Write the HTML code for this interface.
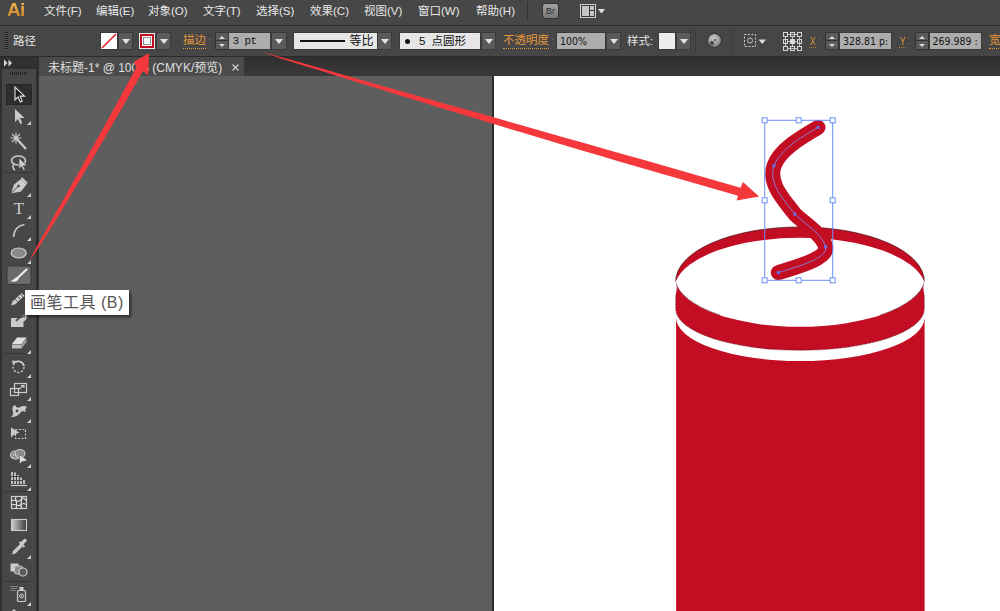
<!DOCTYPE html>
<html lang="zh-CN">
<head>
<meta charset="utf-8">
<title>Illustrator</title>
<style>
html,body{margin:0;padding:0;}
body{width:1000px;height:611px;overflow:hidden;position:relative;background:#5e5e5e;font-family:"Liberation Sans","Noto Sans CJK SC",sans-serif;font-size:12px;color:#e6e6e6;}
.abs{position:absolute;}
#menubar{left:0;top:0;width:1000px;height:25px;background:#474747;}
#menubar span.m{position:absolute;top:3px;line-height:16px;font-size:11.5px;color:#e8e8e8;white-space:nowrap;}
#ctrl{left:0;top:25px;width:1000px;height:31px;background:#464646;border-top:1px solid #2e2e2e;box-sizing:border-box;}
#tabbar{left:0;top:56px;width:1000px;height:20px;background:linear-gradient(#2f2f2f,#393939);border-top:1px solid #2a2a2a;box-sizing:border-box;}
#tab{left:39px;top:57px;width:205px;height:19px;background:#4b4b4b;}
#tab span{position:absolute;left:9px;top:3px;line-height:16px;font-size:12px;color:#e0e0e0;white-space:nowrap;}
#tools{left:0;top:57px;width:39px;height:554px;background:#474747;border-right:3px solid #2f2f2f;box-sizing:border-box;}
#artboard{left:492px;top:76px;width:507px;height:535px;background:#fff;border-left:2px solid #2b2b2b;box-sizing:content-box;}
.lbl{position:absolute;line-height:16px;font-size:11.5px;white-space:nowrap;}
.or{color:#e8973a;}
.dd{position:absolute;top:33px;height:16px;width:13px;background:#5b5b5b;box-shadow:0 0 0 1px #3a3a3a;}
.dd:after{content:"";position:absolute;left:2.5px;top:6px;border-left:4px solid transparent;border-right:4px solid transparent;border-top:5px solid #e4e4e4;}
.inp{position:absolute;top:33px;height:16px;background:#adadad;color:#111;font-size:11px;line-height:16px;box-shadow:0 0 0 1px #3a3a3a;white-space:nowrap;overflow:hidden;}
.box{position:absolute;top:33px;height:16px;background:#e6e6e6;color:#111;box-shadow:0 0 0 1px #3a3a3a;white-space:nowrap;overflow:hidden;}
.spin{position:absolute;top:33px;width:12px;height:16px;background:linear-gradient(to bottom,#5b5b5b 0,#5b5b5b 7.5px,#333 7.5px,#333 8.5px,#5b5b5b 8.5px);box-shadow:0 0 0 1px #333;}
.spin:before{content:"";position:absolute;left:3px;top:2.500px;border-left:3px solid transparent;border-right:3px solid transparent;border-bottom:3.500px solid #dadada;}
.spin:after{content:"";position:absolute;left:3px;top:10.500px;border-left:3px solid transparent;border-right:3px solid transparent;border-top:3.500px solid #dadada;}
.mono{position:absolute;top:0;font-family:"DejaVu Sans Condensed","DejaVu Sans",sans-serif;font-size:10.5px;line-height:16px;color:#151515;white-space:pre;}
.xy{position:absolute;top:36px;font-size:10px;line-height:12px;color:#e8973a;transform:scaleX(0.85);transform-origin:0 0;}
.xyu{position:absolute;top:47px;height:1px;width:8px;background:repeating-linear-gradient(to right,#b37a35 0,#b37a35 1px,transparent 1px,transparent 2px);}
</style>
</head>
<body>
<div id="artboard" class="abs"></div>
<div id="menubar" class="abs">
  <span class="abs" style="left:7px;top:-2px;font-size:19px;line-height:24px;font-weight:bold;color:#e9a33b;letter-spacing:-0.6px;background:linear-gradient(#f3b44d 20%,#c9842a 80%);-webkit-background-clip:text;background-clip:text;-webkit-text-fill-color:transparent;">Ai</span>
  <span class="m" style="left:44px">文件(F)</span>
  <span class="m" style="left:96px">编辑(E)</span>
  <span class="m" style="left:148px">对象(O)</span>
  <span class="m" style="left:203px">文字(T)</span>
  <span class="m" style="left:256px">选择(S)</span>
  <span class="m" style="left:310px">效果(C)</span>
  <span class="m" style="left:364px">视图(V)</span>
  <span class="m" style="left:418px">窗口(W)</span>
  <span class="m" style="left:476px">帮助(H)</span>
</div>
<div id="ctrl" class="abs"></div>
<span class="lbl" style="left:13px;top:33px;">路径</span>

<!-- control bar widgets -->
<div class="abs" style="left:5px;top:32px;width:3px;height:18px;background:repeating-linear-gradient(to bottom,#202020 0,#202020 1px,#505050 1px,#505050 2px);"></div>
<div class="abs" style="left:101px;top:33px;width:16px;height:16px;background:#fff;box-shadow:0 0 0 1px #3a3a3a;overflow:hidden;">
  <svg width="16" height="16" style="display:block"><line x1="1" y1="15" x2="15" y2="1" stroke="#e0202a" stroke-width="1.6"/></svg>
</div>
<div class="dd" style="left:119px"></div>
<div class="abs" style="left:140px;top:34px;width:14px;height:14px;background:#c30d23;box-shadow:0 0 0 1px #e9e9e9;">
  <div class="abs" style="left:3px;top:3px;width:6px;height:6px;background:#fff;border:1px solid #8c8c8c;box-shadow:0 0 0 1px #fff;"></div>
</div>
<div class="dd" style="left:157px"></div>
<span class="lbl or" style="left:183px;top:33px;border-bottom:1px dotted #e8973a;line-height:15px;">描边</span><span class="lbl" style="left:208px;top:33px;color:#9a7040">:</span>
<div class="spin" style="left:216px"></div>
<div class="inp" style="left:229px;width:41px;"><span class="mono" style="left:3.500px;font-family:'Liberation Mono',monospace;font-size:11px;letter-spacing:-0.6px;">3 pt</span></div>
<div class="dd" style="left:272px;width:14px"></div>
<div class="box" style="left:293.500px;width:83px;">
  <div class="abs" style="left:6px;top:7px;width:45px;height:2px;background:#111"></div>
  <span class="abs" style="left:56px;top:0;font-size:12px;line-height:16px;">等比</span>
</div>
<div class="dd" style="left:378px"></div>
<div class="box" style="left:400px;width:80px;">
  <div class="abs" style="left:5px;top:5.500px;width:5px;height:5px;border-radius:50%;background:#111"></div>
  <span class="abs" style="left:19px;top:0;font-size:11.500px;line-height:16px;word-spacing:3px;">5 点圆形</span>
</div>
<div class="dd" style="left:482px"></div>
<span class="lbl or" style="left:503px;top:33px;border-bottom:1px dotted #e8973a;line-height:15px;">不透明度</span><span class="lbl" style="left:551px;top:33px;color:#9a7040">:</span>
<div class="inp" style="left:557px;width:48px;"><span class="mono" style="left:3px">100%</span></div>
<div class="dd" style="left:607px"></div>
<span class="lbl" style="left:627px;top:33px;">样式:</span>
<div class="abs" style="left:659px;top:33px;width:16px;height:16px;background:#ececec;box-shadow:0 0 0 1px #3a3a3a;"></div>
<div class="dd" style="left:677px"></div>
<div class="abs" style="left:695px;top:29px;width:1px;height:24px;background:#3a3a3a;"></div>
<div class="abs" style="left:707.500px;top:34px;width:13px;height:13px;border-radius:50%;background:radial-gradient(circle at 45% 35%,#cfcfcf 0,#9a9a9a 50%,#5a5a5a 100%);box-shadow:0 0 0 1px #333;overflow:hidden;"><div class="abs" style="left:2px;top:7px;width:4px;height:4px;border-radius:50%;background:#2e2e2e;opacity:.8"></div><div class="abs" style="left:6px;top:5px;width:2px;height:2px;border-radius:50%;background:#444;"></div></div>
<div class="abs" style="left:732px;top:29px;width:1px;height:24px;background:#3a3a3a;"></div>
<svg class="abs" style="left:743px;top:33px" width="26" height="16"><rect x="1.5" y="1.5" width="11" height="12" fill="none" stroke="#cacaca" stroke-dasharray="2 1.5"/><circle cx="7" cy="7.5" r="2.5" fill="none" stroke="#bdbdbd"/><path d="M15.5 6.5h7.5l-3.75 4.5z" fill="#dadada"/></svg>
<svg class="abs" style="left:783px;top:31.500px" width="19" height="19" fill="none" stroke="#d6d6d6"><path d="M2.500,5v9M9.500,5v9M16.500,5v9M5,2.500h9M5,9.500h9M5,16.500h9" stroke="#bdbdbd"/><g id="g9"><rect x="0.5" y="0.5" width="4" height="4"/><rect x="7.5" y="0.5" width="4" height="4"/><rect x="14.5" y="0.5" width="4" height="4"/></g><g transform="translate(0,7)"><rect x="0.5" y="0.5" width="4" height="4"/><rect x="7.5" y="0.5" width="4" height="4" fill="#dcdcdc"/><rect x="14.5" y="0.5" width="4" height="4"/></g><g transform="translate(0,14)"><rect x="0.5" y="0.5" width="4" height="4"/><rect x="7.5" y="0.5" width="4" height="4"/><rect x="14.5" y="0.5" width="4" height="4"/></g></svg>
<span class="xy" style="left:810px;">X</span><div class="xyu" style="left:809px"></div><span class="lbl" style="left:818px;top:33px;color:#8a6a40;font-size:10px">:</span>
<div class="spin" style="left:826px"></div>
<div class="inp" style="left:840px;width:51px;"><span class="mono" style="left:3px">328.81 p:</span></div>
<span class="xy" style="left:900px;">Y</span><div class="xyu" style="left:899px"></div><span class="lbl" style="left:907.500px;top:33px;color:#8a6a40;font-size:10px">:</span>
<div class="spin" style="left:915.500px"></div>
<div class="inp" style="left:929.500px;width:51px;"><span class="mono" style="left:3px">269.989 :</span></div>
<span class="lbl or" style="left:989px;top:33px;border-bottom:1px dotted #e8973a;line-height:15px;">宽</span>
<!-- menubar extras -->
<div class="abs" style="left:527px;top:2px;width:1px;height:19px;background:#333;"></div>
<div class="abs" style="left:543px;top:4px;width:15px;height:14px;background:linear-gradient(#a2a2a2,#787878);border-radius:2px;box-shadow:0 0 0 1px #333;font-size:9px;line-height:14px;text-align:center;color:#2a2a2a;">Br</div>
<svg class="abs" style="left:579px;top:3px" width="28" height="16"><rect x="1.500" y="1.500" width="15" height="13" fill="#3a3a3a" stroke="#cfcfcf"/><rect x="3" y="3" width="7" height="10" fill="#c4c4c4"/><rect x="11" y="3" width="4" height="4" fill="#c4c4c4"/><rect x="11" y="8" width="4" height="5" fill="#c4c4c4"/><path d="M19 6h7l-3.500 4.500z" fill="#e0e0e0"/></svg>
<div id="tabbar" class="abs"></div>
<div id="tab" class="abs"><span>未标题-1* @ 100% (CMYK/预览)</span><svg class="abs" style="left:192px;top:6px" width="9" height="9"><path d="M1.500,1.500 l6,6 M7.500,1.500 l-6,6" stroke="#d4d4d4" stroke-width="1.100"/></svg></div>
<div id="tools" class="abs"></div>
<svg class="abs" style="left:0;top:0" width="40" height="611" viewBox="0 0 40 611">
  <rect x="0" y="57" width="2" height="554" fill="#2f2f2f"/>
  <rect x="2" y="57" width="34" height="12" fill="#303030"/>
  <path d="M4,59.500 l3.500,3.500 l-3.500,3.500z M8.500,59.500 l3.500,3.500 l-3.500,3.500z" fill="#d8d8d8"/>
  <path d="M10,73.500 h18" stroke="#262626" stroke-width="3" stroke-dasharray="1 1"/>
  <g stroke="#363636" stroke-width="1"><path d="M4,172.500h30M4,353.500h30M4,491.500h30M4,581.500h30"/></g>
  <!-- selection (active) -->
  <rect x="6.500" y="84.500" width="25" height="20" fill="#2e2e2e" stroke="#262626"/>
  <path d="M15,87 l0,13 l3,-3 l2.300,5 l2,-0.900 l-2.300,-5 l4.500,0z" fill="#1c1c1c" stroke="#e4e4e4" stroke-width="1.100" stroke-linejoin="miter"/>
  <!-- direct selection -->
  <path d="M15,109 l0,13 l3,-3 l2.300,5 l2,-0.900 l-2.300,-5 l4.500,0z" fill="#cbcbcb"/>
  <path d="M31,125 v-4 l-4,4z" fill="#d0d0d0"/>
  <!-- magic wand -->
  <g stroke="#cbcbcb" stroke-width="1.200" fill="none"><path d="M16,138 l10,11" stroke-width="2.200"/><path d="M16,132.500v11M10.500,138h11M12,134l8,8M20,134l-8,8"/></g>
  <!-- lasso -->
  <g fill="none" stroke="#cbcbcb" stroke-width="1.600"><ellipse cx="18.500" cy="160.500" rx="7" ry="4.500"/><path d="M14,164 c-2,2 -1,5 1,6"/></g>
  <path d="M19,158 l0,11 l2.500,-2.500 l2,4 l1.700,-0.800 l-2,-4 l3.800,0z" fill="#cbcbcb" stroke="#474747" stroke-width="0.600"/>
  <!-- pen -->
  <path d="M11,193.500 l3,-9 l7,-5.500 l5.500,5.500 l-5.500,7z" fill="#cbcbcb"/><path d="M11,193.500 l7,-7" stroke="#474747" stroke-width="1"/><circle cx="18.500" cy="186" r="1.300" fill="#474747"/><path d="M21.500,178 l5.500,5.500" stroke="#cbcbcb" stroke-width="2"/>
  <path d="M31,197 v-4 l-4,4z" fill="#d0d0d0"/>
  <!-- type -->
  <text x="19" y="214" text-anchor="middle" font-family="Liberation Serif, serif" font-size="17" fill="#cbcbcb">T</text>
  <path d="M31,219 v-4 l-4,4z" fill="#d0d0d0"/>
  <!-- arc -->
  <path d="M13.500,237 C14,230 18,225.500 24.500,224.500" fill="none" stroke="#cbcbcb" stroke-width="1.600"/>
  <path d="M31,241 v-4 l-4,4z" fill="#d0d0d0"/>
  <!-- ellipse -->
  <ellipse cx="18.700" cy="253" rx="7.500" ry="5" fill="#8a8a8a" stroke="#cbcbcb" stroke-width="1.200"/>
  <path d="M31,264 v-4 l-4,4z" fill="#d0d0d0"/>
  <!-- brush (active) -->
  <rect x="7" y="266" width="24" height="18.500" fill="#6a6a6a" stroke="#383838"/>
  <path d="M26.500,269.500 l-9,8.500" stroke="#ececec" stroke-width="2.200" stroke-linecap="round"/><path d="M17.500,277 c-2.500,0 -3.500,3 -7,4 c3,1.500 8,0.500 8.500,-3z" fill="#ececec"/>
  <!-- pencil -->
  <path d="M11,305.500 l1.500,-4 l9,-8.500 l2.800,2.800 l-9,8.500z" fill="#cbcbcb"/><path d="M15,299 l2.500,2.500M17.500,296.500 l2.500,2.500M20,294 l2.500,2.500" stroke="#474747" stroke-width="0.900"/>
  <!-- blob brush -->
  <path d="M11,318 h9 c1,-3 5,-4 6.500,-2 c1,2 -1,5 -3,5.500 v5.500 h-12.500z" fill="#cbcbcb"/><path d="M16,321 c2,-3 6,-5 9,-4.500" stroke="#474747" stroke-width="1.800" fill="none"/>
  <!-- eraser -->
  <path d="M12,344 l5,-6.500 h9.500 l-5,6.500z" fill="#e0e0e0"/><path d="M12,344.500 h9.500 v4 h-9.500z" fill="#bdbdbd"/><path d="M21.500,344.500 l5,-6.500 v4 l-5,6.500z" fill="#a2a2a2"/>
  <path d="M31,354 v-4 l-4,4z" fill="#d0d0d0"/>
  <!-- rotate -->
  <circle cx="18.500" cy="367" r="5.500" fill="none" stroke="#cbcbcb" stroke-width="1.400" stroke-dasharray="2 1.800"/><path d="M14,363 a6,6 0 0 1 10,3" fill="none" stroke="#cbcbcb" stroke-width="1.600"/><path d="M12,360.500 l4.500,0.500 l-3.500,3.500z" fill="#cbcbcb"/>
  <path d="M31,378 v-4 l-4,4z" fill="#d0d0d0"/>
  <!-- scale -->
  <g fill="none" stroke="#cbcbcb" stroke-width="1.200"><rect x="10.500" y="388.500" width="8" height="7"/><rect x="14.500" y="383.500" width="12" height="9"/><path d="M19,389 l5,-3.500 M21,385.500 h3 v2.500"/></g>
  <path d="M31,401 v-4 l-4,4z" fill="#d0d0d0"/>
  <!-- warp -->
  <path d="M10.500,417 c3,-1 3,-4 2,-7 c-0.500,-2 0.500,-4.500 2.500,-5 c1,2 2.500,3 4.500,2.500 c2,-1.500 5,-2 7.500,-0.500 c-1.500,1 -2,3 -1,5 c-2,-1 -4,-1.500 -5.500,0.500 c-1.500,2.500 -6,5 -10,4.500z" fill="#cbcbcb"/><circle cx="17" cy="411" r="1.400" fill="#474747"/>
  <path d="M31,423 v-4 l-4,4z" fill="#d0d0d0"/>
  <!-- free transform -->
  <rect x="15.500" y="429.500" width="10" height="9" fill="none" stroke="#cbcbcb" stroke-width="1.200" stroke-dasharray="2 1.500"/><path d="M11,427.500 l0,10 l2.500,-2.500 l6,-2.500z" fill="#cbcbcb"/>
  <!-- shape builder -->
  <g fill="#8a8a8a" stroke="#cbcbcb" stroke-width="1.200"><ellipse cx="15.500" cy="455" rx="5" ry="4"/><ellipse cx="20" cy="453.500" rx="5" ry="4"/></g><path d="M13,455h5" stroke="#e6e6e6" stroke-width="1" stroke-dasharray="1 1"/>
  <path d="M19.500,454.500 l0,9.500 l2.300,-2.200 l5.700,-1.300z" fill="#e0e0e0" stroke="#474747" stroke-width="0.500"/>
  <path d="M31,468 v-4 l-4,4z" fill="#d0d0d0"/>
  <!-- perspective grid -->
  <g stroke="#cbcbcb" fill="none"><path d="M12,472 v12.500 M15,472.500 v12 M18,475 v9.500 M21,477.500 v7 M24,480 v4.500" stroke-width="1.800"/><path d="M11,476.500 h8 M11,480.500 h12 M11,484.500 h16" stroke-width="1" stroke="#474747"/><path d="M11,485.500 h16" stroke-width="1.200"/></g>
  <path d="M31,491 v-4 l-4,4z" fill="#d0d0d0"/>
  <!-- mesh -->
  <rect x="11.500" y="496.500" width="15" height="12" fill="#4a4a4a" stroke="#cbcbcb" stroke-width="1.200"/><path d="M11.500,501 c4,-3 6,3 9,-1 s4,-1 6,1 M11.500,505 c4,-2 6,2 9,0 s4,-2 6,0 M16,496.500 c-2,4 3,6 0,12 M21.500,496.500 c2,4 -3,7 0.500,12" fill="none" stroke="#e6e6e6" stroke-width="1.100"/>
  <!-- gradient -->
  <defs><linearGradient id="gg" x1="0" x2="1" y1="0" y2="0"><stop offset="0" stop-color="#cfcfcf"/><stop offset="1" stop-color="#3c3c3c"/></linearGradient></defs>
  <rect x="11.500" y="519.500" width="15" height="11" fill="url(#gg)" stroke="#cbcbcb" stroke-width="1.100"/>
  <!-- eyedropper -->
  <path d="M12,554.500 l1,-3.500 l7,-7 l2.500,2.500 l-7,7z" fill="#cbcbcb"/><path d="M19.500,542 l5,5" stroke="#cbcbcb" stroke-width="2"/><path d="M21.500,544 l3.500,-3.500" stroke="#cbcbcb" stroke-width="3.200" stroke-linecap="round"/>
  <path d="M31,559 v-4 l-4,4z" fill="#d0d0d0"/>
  <!-- blend -->
  <rect x="10.500" y="563.500" width="8" height="8" fill="#cbcbcb"/><rect x="14.500" y="566" width="8" height="8" rx="2" fill="#8a8a8a" stroke="#cbcbcb"/><circle cx="23" cy="572" r="4" fill="#5a5a5a" stroke="#cbcbcb" stroke-width="1.200"/>
  <!-- symbol sprayer -->
  <rect x="17.500" y="590.500" width="8" height="11" rx="1" fill="#4a4a4a" stroke="#cbcbcb" stroke-width="1.200"/><rect x="19.500" y="587" width="4" height="3" fill="#cbcbcb"/><circle cx="21.500" cy="596" r="2" fill="none" stroke="#cbcbcb"/><circle cx="21.500" cy="596" r="0.800" fill="#cbcbcb"/><path d="M10.500,586.500h7M11.500,588.500h5M10.500,590.500h6" stroke="#bdbdbd" stroke-width="1" stroke-dasharray="1 1"/>
  <path d="M31,606 v-4 l-4,4z" fill="#d0d0d0"/>
  <path d="M12,611 l2,-2 l2,2z" fill="#cbcbcb"/>
</svg>


<svg class="abs" style="left:0;top:0" width="1000" height="611" viewBox="0 0 1000 611">
  <defs><clipPath id="cv"><rect x="39" y="76" width="961" height="535"/></clipPath></defs>
  <g clip-path="url(#cv)">
    <!-- can body -->
    <path d="M676.100,317.500 A124.250,43.500 0 0 0 924.600,317.500 L924.600,620 L676.100,620 Z" fill="#c30d23"/>
    <!-- lid -->
    <g transform="translate(0.3,0)">
    <path d="M675.400,308.800 L675.400,281.300 A124.300,54.400 0 0 1 924,281.300 L924,308.800 A124.300,41.600 0 0 1 675.400,308.800 Z" fill="#c30d23"/>
    <path d="M675.400,281.300 A124.300,54.400 0 0 1 924,281.300" fill="none" stroke="#40181c" stroke-width="0.8" opacity="0.85"/>
    <path d="M675.400,290 L675.400,308.800 A124.300,41.600 0 0 0 924,308.800 L924,290" fill="none" stroke="#40181c" stroke-width="0.7" stroke-dasharray="1.500 1.200" opacity="0.8"/>
    <path d="M675.300,282 A125.800,52 0 0 1 924.100,282 A125,49.600 0 0 1 675.300,282 Z" fill="#fff"/>
    <path d="M720,315 A125,49.600 0 0 1 675.300,282" fill="none" stroke="#40181c" stroke-width="0.7" opacity="0.7"/>
    <path d="M924.100,282 A125,49.600 0 0 1 880,315" fill="none" stroke="#40181c" stroke-width="0.7" opacity="0.7"/>
    <path d="M926,281 L924.300,282 Q921.800,286 924.200,295 L926,295 Z" fill="#fff"/>
    <path d="M673.500,281 L675.200,282 Q677.700,286 675.300,295 L673.500,295 Z" fill="#fff"/>
    </g>
    <!-- squiggle -->
    <g transform="translate(-0.8,-0.2)">
    <path id="sq" d="M818.800,127.600 C800.800,138 780.800,150 774.800,166 C768.800,184 784.800,200 795.600,214.300 C805.800,224.200 822.800,234.200 826.500,247 C829,258.200 800.800,266.200 779.100,272.800" fill="none" stroke="#c30d23" stroke-width="15" stroke-linecap="round" stroke-linejoin="round"/>
    <path d="M818.800,127.600 C800.800,138 780.800,150 774.800,166 C768.800,184 784.800,200 795.600,214.300 C805.800,224.200 822.800,234.200 826.500,247 C829,258.200 800.800,266.200 779.100,272.800" fill="none" stroke="#8486e6" stroke-width="0.9"/>
    <g fill="#6672e8"><rect x="817.300" y="126.100" width="3" height="3"/><rect x="773.300" y="164.500" width="3" height="3"/><rect x="794.100" y="212.800" width="3" height="3"/><rect x="825" y="245.500" width="3" height="3"/><rect x="777.600" y="271.300" width="3" height="3"/></g>
    <rect x="765.500" y="120.500" width="68" height="160" fill="none" stroke="#6b90f6" stroke-width="1"/>
    <g fill="#fff" stroke="#6b90f6" stroke-width="1">
      <rect x="763" y="118" width="5" height="5"/><rect x="797" y="118" width="5" height="5"/><rect x="831" y="118" width="5" height="5"/>
      <rect x="763" y="198" width="5" height="5"/><rect x="831" y="198" width="5" height="5"/>
      <rect x="763" y="278" width="5" height="5"/><rect x="797" y="278" width="5" height="5"/><rect x="831" y="278" width="5" height="5"/>
    </g>
    </g>
  </g>
  <path d="M149.0,53.0 L148.0,75.2 L143.0,70.9 L138.4,78.9 L133.9,86.9 L129.4,95.0 L124.8,103.0 L120.2,111.0 L115.6,119.0 L111.0,127.0 L106.4,135.0 L101.7,142.9 L97.1,150.9 L92.4,158.9 L87.7,166.8 L83.0,174.7 L78.3,182.7 L73.6,190.6 L68.8,198.5 L64.0,206.4 L59.3,214.3 L54.4,222.2 L49.6,230.0 L44.7,237.9 L39.8,245.7 L34.8,253.5 L29.4,261.0 L33.5,252.7 L37.9,244.6 L42.4,236.6 L47.0,228.5 L51.5,220.5 L56.0,212.4 L60.6,204.4 L65.1,196.4 L69.6,188.3 L74.1,180.3 L78.7,172.2 L83.2,164.2 L87.7,156.1 L92.2,148.1 L96.6,140.0 L101.1,131.9 L105.6,123.9 L110.0,115.8 L114.5,107.7 L118.9,99.6 L123.3,91.5 L127.7,83.4 L132.1,75.3 L136.5,67.1 L133.5,62.0Z" fill="#f5383b"/>
  <path d="M759.1,196.5 L736.5,200.4 L738.1,195.8 L718.1,190.1 L698.2,184.3 L678.2,178.6 L658.2,172.8 L638.2,167.1 L618.3,161.2 L598.4,155.3 L578.4,149.4 L558.5,143.5 L538.6,137.5 L518.7,131.6 L498.7,125.6 L478.9,119.6 L459.0,113.5 L439.1,107.4 L419.2,101.3 L399.4,95.2 L379.5,89.1 L359.6,82.9 L339.8,76.8 L319.9,70.6 L300.1,64.4 L280.2,58.2 L260.5,51.6 L280.6,56.9 L300.6,62.6 L320.6,68.3 L340.6,74.0 L360.6,79.7 L380.6,85.4 L400.6,91.0 L420.6,96.7 L440.6,102.4 L460.6,108.0 L480.6,113.6 L500.6,119.3 L520.6,125.0 L540.6,130.7 L560.6,136.4 L580.6,142.0 L600.6,147.7 L620.6,153.4 L640.6,159.1 L660.6,164.8 L680.5,170.5 L700.5,176.3 L720.5,182.0 L740.5,187.7 L743.0,182.1Z" fill="#f5383b"/>
</svg>

<div class="abs" style="left:25px;top:290px;width:104px;height:25px;background:#fff;box-shadow:2px 2px 3px rgba(0,0,0,0.55);"><span class="abs" style="left:5px;top:3px;font-size:16px;line-height:20px;color:#555;white-space:nowrap;letter-spacing:0.5px;">画笔工具 (B)</span></div>
</body>
</html>
